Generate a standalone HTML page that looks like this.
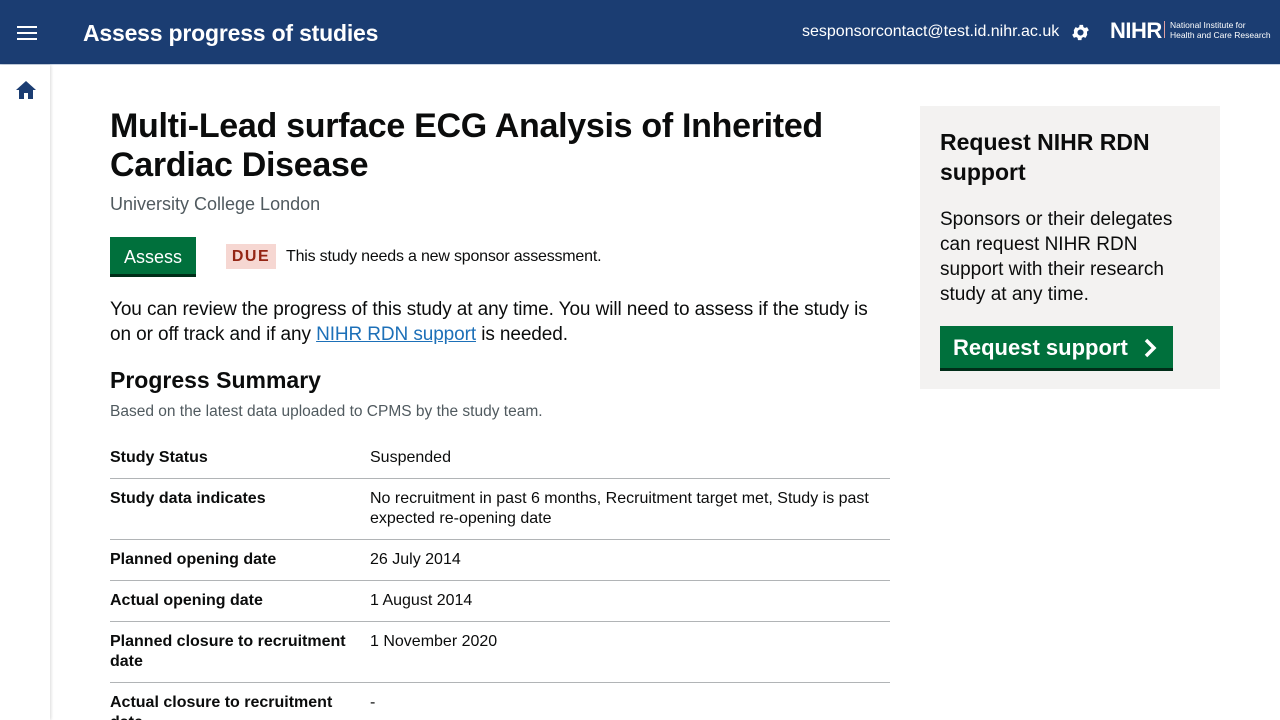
<!DOCTYPE html>
<html style="overflow:hidden"><head><style>
*{margin:0;padding:0;box-sizing:border-box}
html,body{width:1280px;height:720px;overflow:hidden}
body{font-family:"Liberation Sans",sans-serif;color:#0b0c0c;background:#fff;position:relative}
.hdr{position:absolute;left:0;top:0;width:1280px;height:65px;background:#1b3d72;border-bottom:1px solid #c8d3e3}
.side{position:absolute;left:0;top:65px;width:50px;height:655px;background:#fff;box-shadow:1px 0 3px rgba(0,0,0,.15)}
.t{position:absolute;white-space:nowrap}
table{position:absolute;left:110px;top:438px;width:780px;border-collapse:collapse;font-size:16px;line-height:20px}
td{padding:10px 0;vertical-align:top;border-bottom:1px solid #b1b4b6}
td.l{width:260px;font-weight:bold;padding-right:10px}
</style></head><body>
<div class="hdr">
<svg style="position:absolute;left:17px;top:26px" width="20" height="14"><rect y="0" width="20" height="2" fill="#fff"/><rect y="6" width="20" height="2" fill="#fff"/><rect y="12" width="20" height="2" fill="#fff"/></svg>
<div class="t" style="left:83px;top:20px;font-size:23px;font-weight:bold;color:#fff;letter-spacing:-0.2px">Assess progress of studies</div>
<div class="t" style="left:802px;top:23px;font-size:16px;color:#fff">sesponsorcontact@test.id.nihr.ac.uk</div>
<svg style="position:absolute;left:1070px;top:22px" width="21" height="21" viewBox="0 0 24 24"><path fill="#fff" d="M19.4 13a7.5 7.5 0 0 0 0-2l2.1-1.6-2-3.5-2.5 1a7 7 0 0 0-1.7-1l-.4-2.6h-4l-.4 2.6a7 7 0 0 0-1.7 1l-2.5-1-2 3.5L4.6 11a7.5 7.5 0 0 0 0 2l-2.1 1.6 2 3.5 2.5-1a7 7 0 0 0 1.7 1l.4 2.6h4l.4-2.6a7 7 0 0 0 1.7-1l2.5 1 2-3.5zM12 15.5a3.5 3.5 0 1 1 0-7 3.5 3.5 0 0 1 0 7z"/></svg>
<div class="t" style="left:1110px;top:18px;font-size:22px;font-weight:bold;color:#fff;letter-spacing:-0.5px">NIHR</div>
<div style="position:absolute;left:1164px;top:21px;width:1px;height:17px;background:#e0a0a0"></div>
<div class="t" style="left:1170px;top:20px;font-size:8.5px;line-height:10px;color:#fff">National Institute for<br>Health and Care Research</div>
</div>
<div class="side">
<svg style="position:absolute;left:15px;top:15px" width="22" height="20" viewBox="0 0 22 20"><path fill="#1b3d72" d="M11 1 1 10h3v9h5v-6h4v6h5v-9h3z"/></svg>
</div>
<div class="t" style="left:110px;top:107px;font-size:34px;line-height:39px;font-weight:bold;white-space:normal;width:780px;letter-spacing:-0.3px">Multi-Lead surface ECG Analysis of Inherited Cardiac Disease</div>
<div class="t" style="left:110px;top:194px;font-size:18px;color:#505a5f">University College London</div>
<div style="position:absolute;left:110px;top:237px;width:86px;height:40px;background:#00703c;border-bottom:3px solid #002d18;color:#fff;font-size:18px;line-height:40px;text-align:center">Assess</div>
<div style="position:absolute;left:226px;top:244px;width:50px;height:25px;background:#f6d7d2;color:#942514;font-weight:bold;font-size:16px;letter-spacing:1.5px;line-height:26px;text-align:center">DUE</div>
<div class="t" style="left:286px;top:248px;font-size:16px;letter-spacing:-0.2px">This study needs a new sponsor assessment.</div>
<div class="t" style="left:110px;top:297px;font-size:19px;line-height:25px;white-space:normal;width:780px;letter-spacing:-0.1px">You can review the progress of this study at any time. You will need to assess if the study is on or off track and if any <span style="color:#1d70b8;text-decoration:underline">NIHR RDN support</span> is needed.</div>
<div class="t" style="left:110px;top:367px;font-size:23px;font-weight:bold">Progress Summary</div>
<div class="t" style="left:110px;top:403px;font-size:15.5px;color:#505a5f">Based on the latest data uploaded to CPMS by the study team.</div>
<table>
<tr><td class="l">Study Status</td><td>Suspended</td></tr>
<tr><td class="l">Study data indicates</td><td>No recruitment in past 6 months, Recruitment target met, Study is past expected re-opening date</td></tr>
<tr><td class="l">Planned opening date</td><td>26 July 2014</td></tr>
<tr><td class="l">Actual opening date</td><td>1 August 2014</td></tr>
<tr><td class="l">Planned closure to recruitment date</td><td>1 November 2020</td></tr>
<tr><td class="l">Actual closure to recruitment date</td><td>-</td></tr>
</table>
<div style="position:absolute;left:920px;top:106px;width:300px;height:283px;background:#f3f2f1"></div>
<div class="t" style="left:940px;top:127px;font-size:23px;line-height:30px;font-weight:bold;white-space:normal;width:260px">Request NIHR RDN support</div>
<div class="t" style="left:940px;top:207px;font-size:19px;line-height:25px;white-space:normal;width:250px">Sponsors or their delegates can request NIHR RDN support with their research study at any time.</div>
<div style="position:absolute;left:940px;top:326px;width:233px;height:45px;background:#00703c;border-bottom:3px solid #002d18;color:#fff;font-size:22px;font-weight:bold;line-height:44px;padding-left:13px">Request support
<svg style="position:absolute;left:204px;top:12px" width="14" height="20" viewBox="0 0 14 20"><path d="M2 2l8 8-8 8" stroke="#fff" stroke-width="3.5" fill="none"/></svg></div>
</body></html>
